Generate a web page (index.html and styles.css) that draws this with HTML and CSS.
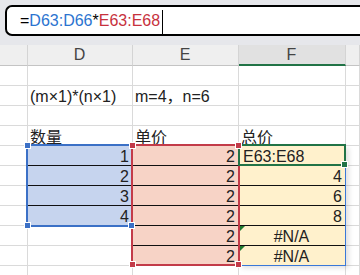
FILE: index.html
```html
<!DOCTYPE html>
<html lang="zh-CN">
<head>
    <meta charset="UTF-8">
    <meta name="viewport" content="width=device-width, initial-scale=1.0">
    <title>Sheet</title>
    <link rel="stylesheet" href="styles.css">
</head>
<body>
    <div class="formula-bar">
        <div class="formula-box">=<span class="ref-d">D63:D66</span>*<span class="ref-e">E63:E68</span><span class="caret"></span></div>
    </div>

    <div class="sheet">
        <div class="cells">
            <!-- column headers -->
            <div class="cell head"></div>
            <div class="cell head">D</div>
            <div class="cell head">E</div>
            <div class="cell head active">F</div>
            <div class="cell head"></div>

            <div class="cell"></div><div class="cell"></div><div class="cell"></div><div class="cell"></div><div class="cell"></div>

            <div class="cell"></div>
            <div class="cell">(m×1)*(n×1)</div>
            <div class="cell">m=4，n=6</div>
            <div class="cell"></div>
            <div class="cell"></div>

            <div class="cell"></div><div class="cell"></div><div class="cell"></div><div class="cell"></div><div class="cell"></div>

            <div class="cell"></div>
            <div class="cell title">数量</div>
            <div class="cell title">单价</div>
            <div class="cell title">总价</div>
            <div class="cell"></div>

            <div class="cell"></div>
            <div class="cell num blue line">1</div>
            <div class="cell num red line">2</div>
            <div class="cell yellow edit">E63:E68</div>
            <div class="cell"></div>

            <div class="cell"></div>
            <div class="cell num blue line">2</div>
            <div class="cell num red line">2</div>
            <div class="cell num yellow line">4</div>
            <div class="cell"></div>

            <div class="cell"></div>
            <div class="cell num blue line">3</div>
            <div class="cell num red line">2</div>
            <div class="cell num yellow line">6</div>
            <div class="cell"></div>

            <div class="cell"></div>
            <div class="cell num blue">4</div>
            <div class="cell num red line">2</div>
            <div class="cell num yellow line">8</div>
            <div class="cell"></div>

            <div class="cell"></div>
            <div class="cell"></div>
            <div class="cell num red line">2</div>
            <div class="cell center yellow line err">#N/A</div>
            <div class="cell"></div>

            <div class="cell"></div>
            <div class="cell"></div>
            <div class="cell num red">2</div>
            <div class="cell center yellow err">#N/A</div>
            <div class="cell"></div>

            <div class="cell"></div><div class="cell"></div><div class="cell"></div><div class="cell"></div><div class="cell"></div>
        </div>

        <!-- selection marks drawn over the cells -->
        <div class="marks">
            <div class="range range-d">
                <span class="handle blue-h tl"></span>
                <span class="handle blue-h bl"></span>
                <span class="handle blue-h br"></span>
            </div>
            <div class="range range-e">
                <span class="handle red-h tl"></span>
                <span class="handle red-h tr"></span>
                <span class="handle red-h bl"></span>
                <span class="handle red-h br"></span>
            </div>
            <div class="range range-f"></div>
            <div class="range active-cell">
                <span class="handle green-h br"></span>
            </div>
        </div>
    </div>
</body>
</html>
```

FILE: styles.css
```css
*{
    box-sizing: border-box;
    margin: 0;
    padding: 0;
}

body{
    width: 360px;
    height: 275px;
    overflow: hidden;
    background: #e6e7eb;
    font-family: "Liberation Sans", "Noto Sans CJK SC", sans-serif;
}

.formula-bar{
    padding: 5px 0 9px 5px;
}

.formula-box{
    height: 31px;
    border: 2px solid #000;
    border-right: none;
    border-radius: 7px 0 0 7px;
    background: #fff;
    padding: 1px 0 0 13px;
    font-size: 16px;
    line-height: 26px;
    color: #000;
    white-space: nowrap;
}

.ref-d{
    color: #2b74d0;
}

.ref-e{
    color: #c7313d;
}

.caret{
    display: inline-block;
    width: 1px;
    height: 24px;
    margin-left: 2px;
    background: #000;
    vertical-align: middle;
}

/* sheet: cells and marks share one grid area */
.sheet{
    display: grid;
    background: #fff;
}

.cells,.marks{
    grid-area: 1 / 1;
    display: grid;
    grid-template-columns: 28px 105px 106px 107px 1fr;
    grid-template-rows: 21px repeat(11, 20px);
}

.cell{
    position: relative;
    border-right: 1px solid #dadada;
    border-bottom: 1px solid #dadada;
    padding: 2px 3px 0 2px;
    font-size: 16px;
    line-height: 17px;
    color: #222;
    white-space: nowrap;
}

.head{
    background: #efefef;
    border-right-color: #d4d4d4;
    border-bottom-color: #c4c4c4;
    padding-top: 1px;
    text-align: center;
    font-size: 16px;
    color: #444;
}

.head.active{
    background: #e1e1e1;
    border-bottom: 2px solid #217346;
}

.title{
    padding-top: 3px;
    line-height: 18px;
}

.num{
    text-align: right;
}

.center{
    text-align: center;
}

.edit{
    padding-left: 4px;
}

.blue{
    background: #c6d4ee;
}

.red{
    background: #f7d3c6;
}

.yellow{
    background: #fff1cc;
}

.line{
    border-bottom-color: #111;
}

.err::before{
    content: "";
    position: absolute;
    top: 0;
    left: 0;
    border-top: 6px solid #1f7a30;
    border-right: 6px solid transparent;
}

/* selection marks */
.range{
    position: relative;
}

.range-d{
    grid-row: 6 / 10;
    grid-column: 2 / 3;
    margin: -2px 0 -1px -2px;
    border: 2px solid #3b70c6;
}

.range-e{
    grid-row: 6 / 12;
    grid-column: 3 / 4;
    margin: -2px -1px 0 -2px;
    border: 2px solid #c33b49;
}

.range-f{
    grid-row: 6 / 12;
    grid-column: 4 / 5;
    border-right: 1px solid #3a78d8;
    border-bottom: 1px solid #3a78d8;
    box-shadow: 3px 2px 5px rgba(0, 0, 0, 0.12);
}

.active-cell{
    grid-row: 6 / 7;
    grid-column: 4 / 5;
    margin: -2px 0 0 -1px;
    border: 2px solid #217346;
}

.handle{
    position: absolute;
    width: 7px;
    height: 7px;
    border: 1px solid #fff;
    z-index: 2;
}

.tl{ top: -4px; left: -4px; }
.tr{ top: -4px; right: -4px; }
.bl{ bottom: -4px; left: -4px; }
.br{ bottom: -4px; right: -4px; }

.blue-h{
    background: #3b70c6;
}

.red-h{
    background: #c33b49;
}

.green-h{
    background: #217346;
}
```
